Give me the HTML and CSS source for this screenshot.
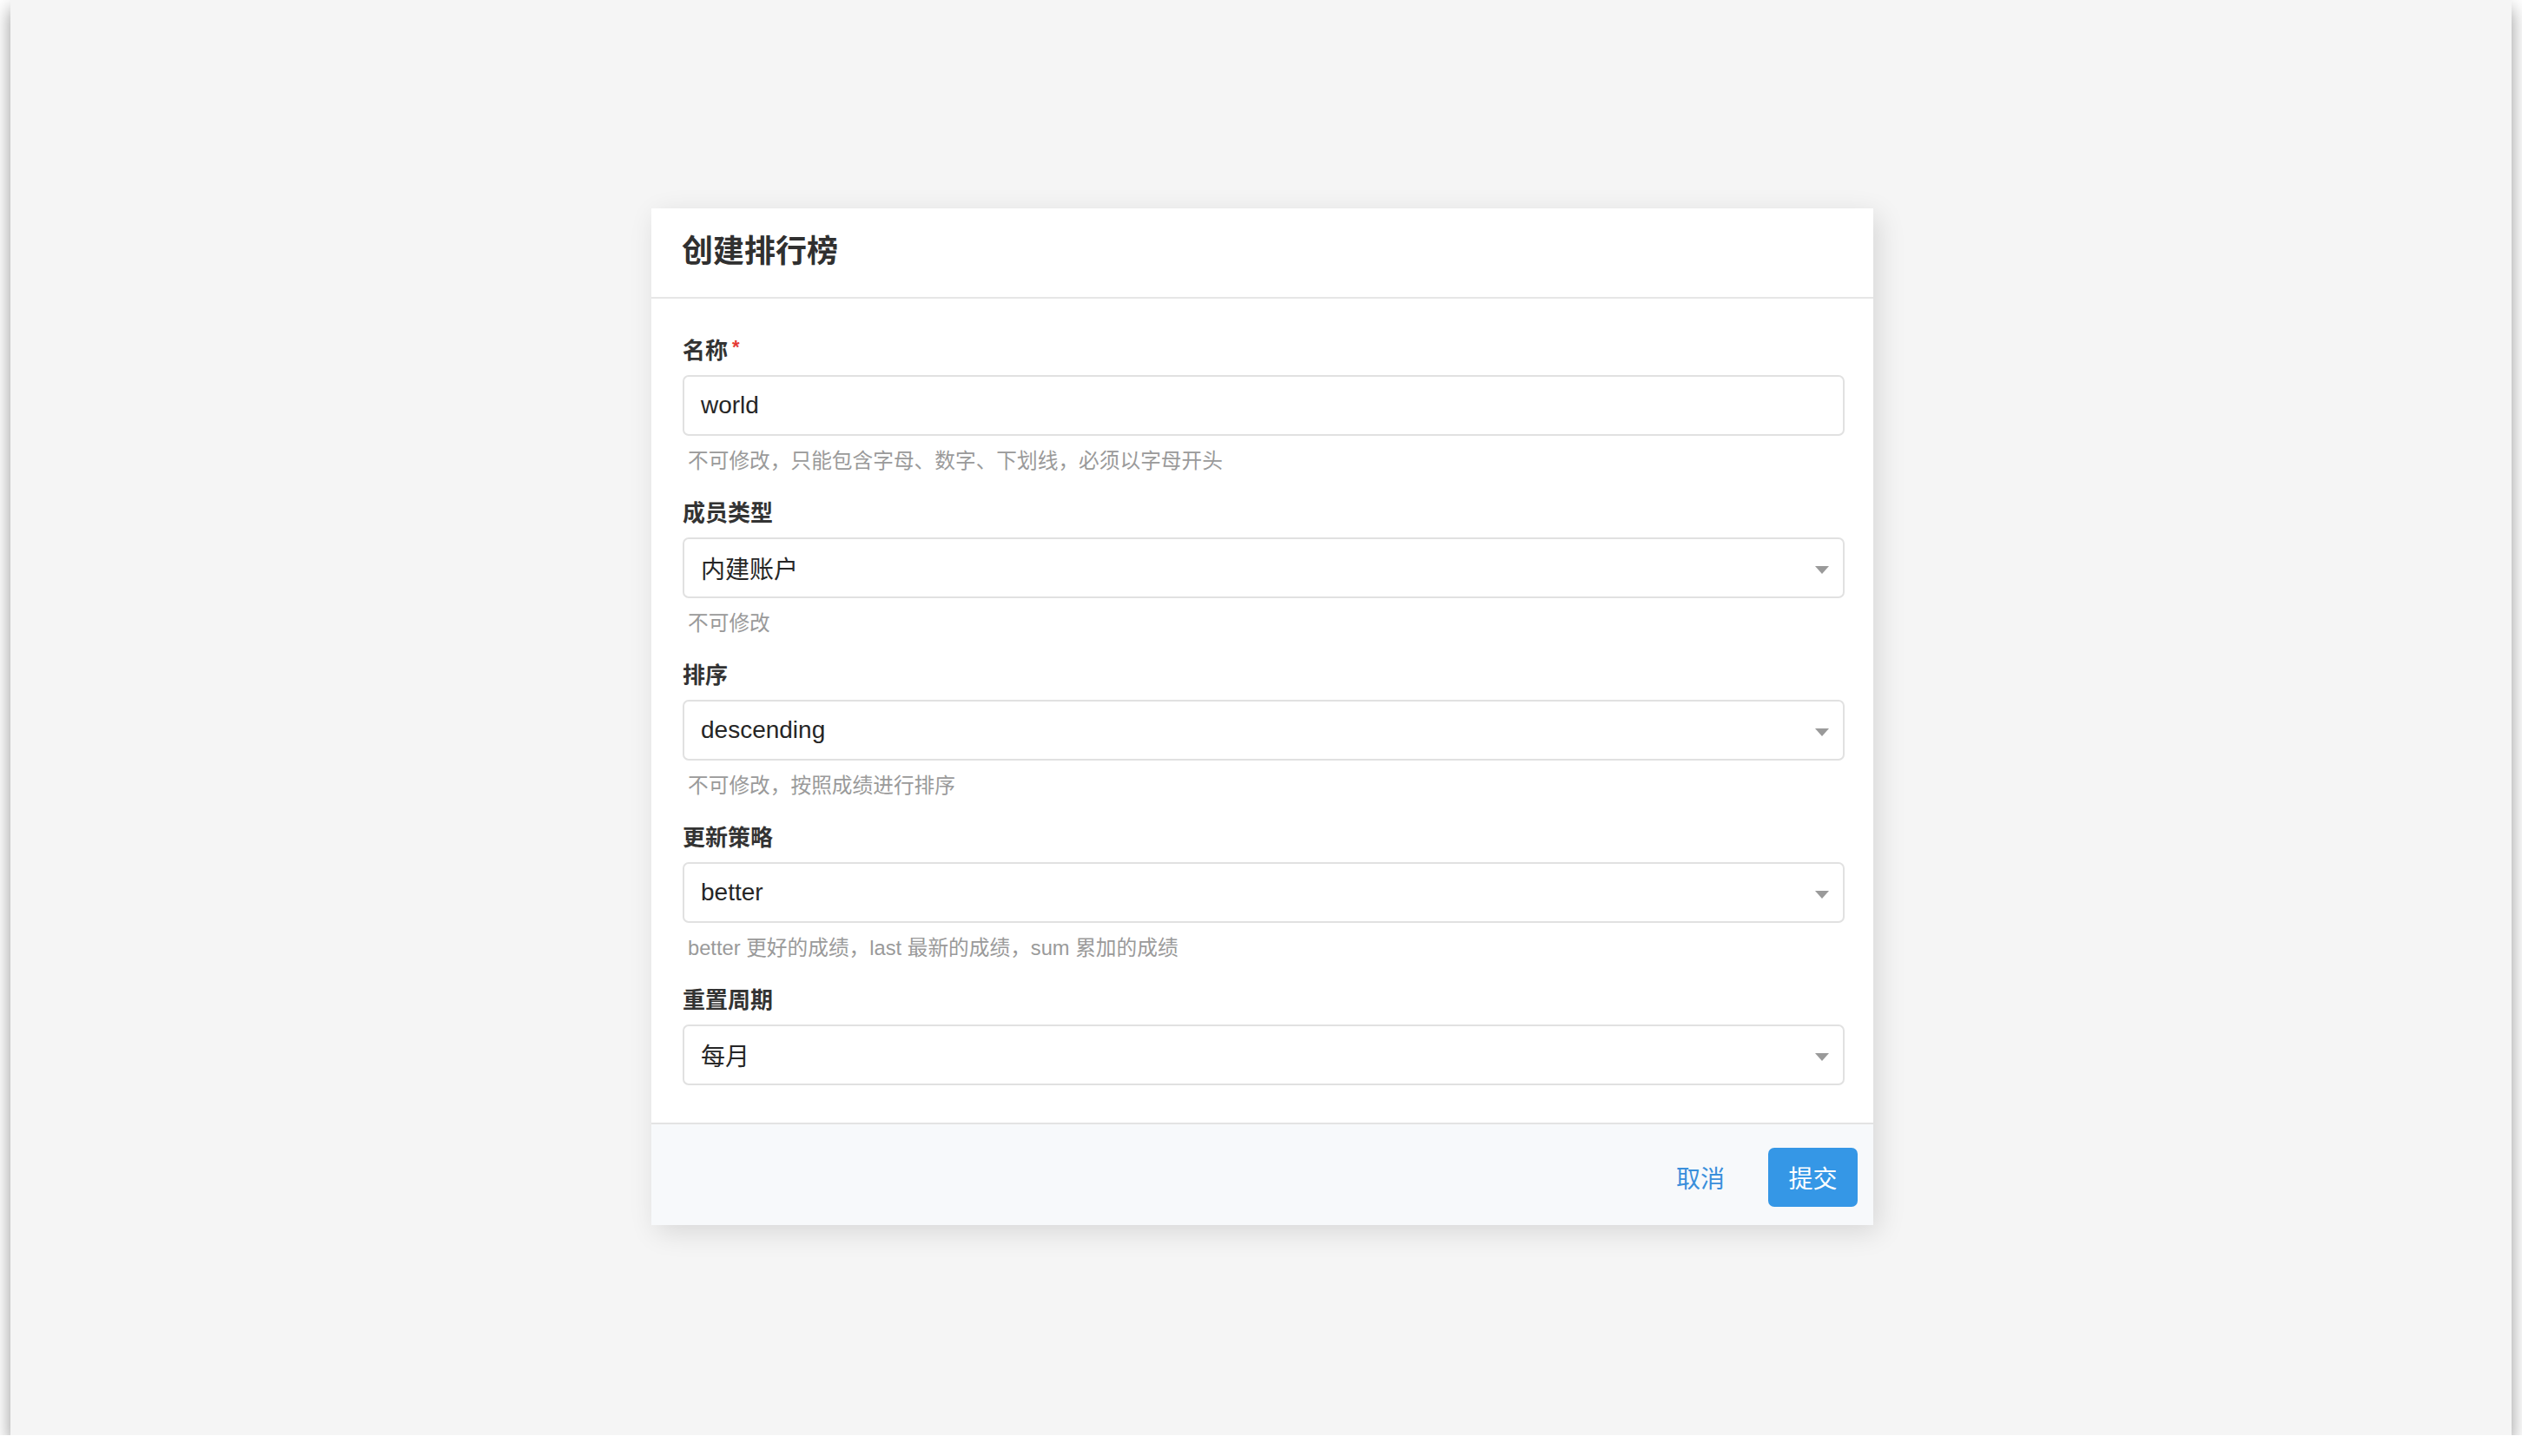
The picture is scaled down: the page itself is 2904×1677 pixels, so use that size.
FILE: index.html
```html
<!DOCTYPE html>
<html lang="zh-CN">
<head>
<meta charset="utf-8">
<title>创建排行榜</title>
<link rel="stylesheet" href="styles.css">
</head>
<body>
<div class="window">
  <div class="modal">
    <div class="modal-header">
      <h2 class="modal-title">创建排行榜</h2>
    </div>
    <div class="modal-body">
      <div class="form-item">
        <div class="form-label">名称<span class="req">*</span></div>
        <div class="control">world</div>
        <div class="help">不可修改，只能包含字母、数字、下划线，必须以字母开头</div>
      </div>
      <div class="form-item">
        <div class="form-label">成员类型</div>
        <div class="control select"><span>内建账户</span><i class="caret"></i></div>
        <div class="help">不可修改</div>
      </div>
      <div class="form-item">
        <div class="form-label">排序</div>
        <div class="control select"><span>descending</span><i class="caret"></i></div>
        <div class="help">不可修改，按照成绩进行排序</div>
      </div>
      <div class="form-item">
        <div class="form-label">更新策略</div>
        <div class="control select"><span>better</span><i class="caret"></i></div>
        <div class="help">better 更好的成绩，last 最新的成绩，sum 累加的成绩</div>
      </div>
      <div class="form-item last">
        <div class="form-label">重置周期</div>
        <div class="control select"><span>每月</span><i class="caret"></i></div>
      </div>
    </div>
    <div class="modal-footer">
      <button class="btn btn-text">取消</button>
      <button class="btn btn-primary">提交</button>
    </div>
  </div>
</div>
</body>
</html>
```

FILE: styles.css
```css
html, body {
  margin: 0;
  padding: 0;
  background: #ffffff;
}

body {
  font-family: "Liberation Sans", "Noto Sans CJK SC", sans-serif;
  color: #333333;
}

.window {
  width: 2880px;
  height: 1653px;
  margin-left: 12px;
  background: #f5f5f5;
  box-shadow: 0 10px 20px rgba(0, 0, 0, 0.42);
  display: flex;
  flex-direction: column;
  align-items: center;
  padding: 240px 0 0 3px;
  box-sizing: border-box;
}

.modal {
  width: 1407px;
  background: #ffffff;
  box-shadow: 6px 8px 30px rgba(0, 0, 0, 0.12);
}

.modal-header {
  height: 104px;
  border-bottom: 2px solid #e6e6e6;
  display: flex;
  align-items: center;
  padding: 0 32px 3px 35px;
  box-sizing: border-box;
}

.modal-title {
  margin: 0;
  font-size: 36px;
  font-weight: 700;
  color: #303030;
  line-height: 1;
}

.modal-body {
  padding: 46px 33px 43px 36px;
}

.form-item {
  margin-bottom: 31px;
}

.form-item.last {
  margin-bottom: 0;
}

.form-label {
  height: 28px;
  line-height: 28px;
  font-size: 26px;
  font-weight: 700;
  color: #333333;
  margin-bottom: 14px;
}

.req {
  color: #e53935;
  font-size: 22px;
  margin-left: 5px;
  vertical-align: top;
  position: relative;
  top: -4px;
}

.control {
  height: 70px;
  border: 2px solid #e1e1e1;
  border-radius: 7px;
  box-sizing: border-box;
  display: flex;
  align-items: center;
  padding: 0 16px 0 19px;
  font-size: 28px;
  color: #262626;
}

.select {
  justify-content: space-between;
}

.caret {
  width: 0;
  height: 0;
  border-left: 8px solid transparent;
  border-right: 8px solid transparent;
  border-top: 9px solid #9a9a9a;
  margin-top: 4px;
}

.help {
  margin-top: 14px;
  height: 30px;
  line-height: 30px;
  font-size: 23.7px;
  color: #9a9a9a;
  padding-left: 6px;
}

.modal-footer {
  border-top: 2px solid #e3e3e3;
  background: #f7f9fb;
  display: flex;
  justify-content: flex-end;
  align-items: flex-start;
  gap: 26px;
  padding: 27px 18px 21px 36px;
}

.btn {
  height: 68px;
  border: none;
  border-radius: 7px;
  font-family: "Liberation Sans", "Noto Sans CJK SC", sans-serif;
  font-size: 28px;
  padding: 0 24px;
  cursor: pointer;
}

.btn-text {
  background: transparent;
  color: #3a8fdb;
}

.btn-primary {
  background: #3597e6;
  color: #ffffff;
  width: 103px;
  padding: 0;
}
```
